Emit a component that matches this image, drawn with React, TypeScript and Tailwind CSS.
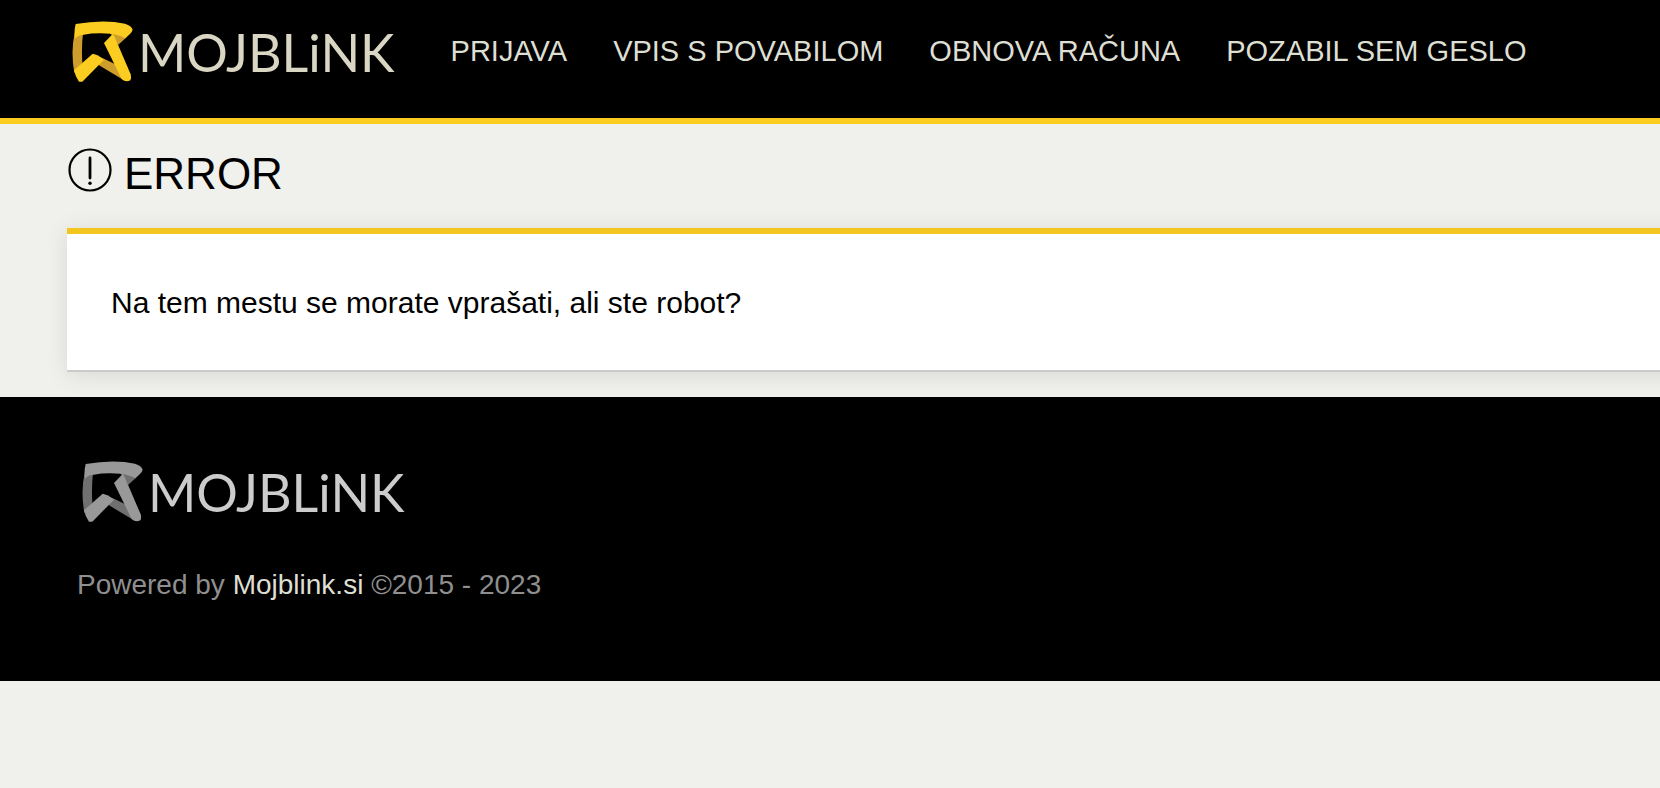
const navItems = ["PRIJAVA", "VPIS S POVABILOM", "OBNOVA RAČUNA", "POZABIL SEM GESLO"];

export default function App() {
  return (
    <div className="min-h-screen overflow-x-hidden bg-[#f0f1ec] font-['Liberation_Sans',Arial,sans-serif] text-black">
      <header className="flex h-[124px] items-start border-b-6 border-[#facd1f] bg-black pl-[72px]">
        <a href="#" className="mt-[21px]">
          <Logo front="#facd20" back="#cf9d2c" textClass="text-[#d9d6c3]" />
        </a>
        <nav className="mt-[31px] ml-14 flex gap-[46px] text-[29px] leading-10 whitespace-nowrap text-[#dddfd3]">
          {navItems.map((item) => (
            <a key={item} href="#">
              {item}
            </a>
          ))}
        </nav>
      </header>

      <main className="pb-[25px] pl-[67px]">
        <h1 className="flex h-[104px] items-start gap-3 pt-6 pl-px text-[44px] leading-[52px]">
          <AlertIcon />
          ERROR
        </h1>
        {/* runs past the right edge so its shadow does not fade there */}
        <section className="-mr-10 border-t-6 border-b-2 border-t-[#f2c61f] border-b-[#cbcbca] bg-white px-11 pt-[49px] pb-[47px] shadow-[0_3px_22px_rgba(0,0,0,0.1)]">
          <p className="text-[30px] leading-10">
            Na tem mestu se morate vprašati, ali ste robot?
          </p>
        </section>
      </main>

      <footer className="h-[284px] bg-black pt-16 pl-[77px] text-[#8f8f8f]">
        <a href="#" className="flex pl-[5px]">
          <Logo front="#999999" back="#707070" textClass="text-[#cccccc]" />
        </a>
        <p className="mt-[42px] text-[28px] leading-10">
          Powered by{" "}
          <a href="#" className="text-[#dddfd3]">
            Mojblink.si
          </a>{" "}
          ©2015 - 2023
        </p>
      </footer>
    </div>
  );
}

function Logo({ front, back, textClass }: { front: string; back: string; textClass: string }) {
  return (
    <span className="flex items-center gap-1">
      <svg viewBox="69 64 186 186" className="size-[62px] shrink-0" aria-hidden="true">
        <path d="M78 98L102 100Q97 145 100 190L76 220Q64 150 78 98Z" fill={back} />
        <path d="M135 165L165 177L205 197L225 242L150 197Z" fill={back} />
        <path d="M180 98L240 98L231 114L207 136L194 112Z" fill={back} />
        <path
          d="M80 73Q165 58 228 72Q248 78 251 90Q249 97 243 103L229 116Q212 105 185 102Q135 99 104 105Q86 106 77 117Q75 92 80 73Z"
          fill={front}
        />
        <path d="M191 103L165 130L218 238Q230 249 244 242Q248 236 245 224L207 135L197 112Z" fill={front} />
        <path d="M75 212L131 162Q146 164 165 180L100 246L90 246Q79 232 75 212Z" fill={front} />
      </svg>
      <span className={`font-[Lato,sans-serif] text-[52px] leading-[62px] ${textClass}`}>MOJBLiNK</span>
    </span>
  );
}

function AlertIcon() {
  return (
    <svg viewBox="0 0 44 44" className="size-11 shrink-0" fill="none" stroke="currentColor" aria-hidden="true">
      <circle cx="22" cy="22" r="20.5" strokeWidth="2.2" />
      <path d="M22 10V30" strokeWidth="2.8" strokeLinecap="round" />
      <circle cx="22" cy="35.3" r="1.7" fill="currentColor" stroke="none" />
    </svg>
  );
}
